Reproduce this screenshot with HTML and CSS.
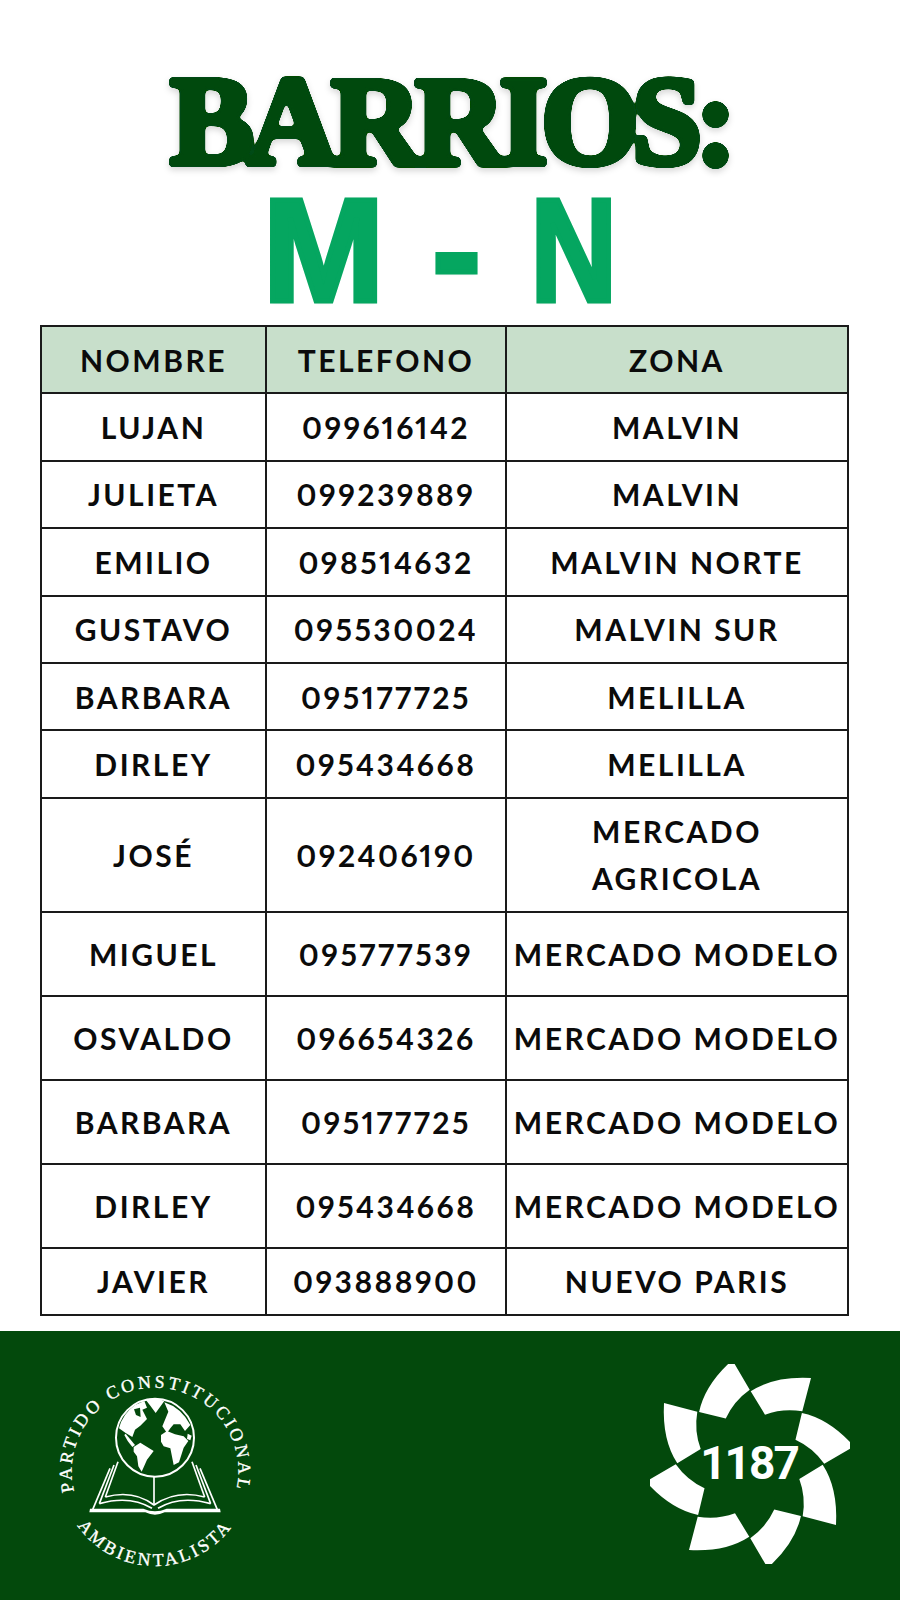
FILE: index.html
```html
<!DOCTYPE html>
<html lang="es">
<head>
  <meta charset="UTF-8" />
  <meta name="viewport" content="width=device-width, initial-scale=1.0"/>
  <title>Barrios M - N</title>
  <link rel="stylesheet" href="styles.css">
</head>
<body>
  <!-- rounds the serif corners of the title -->
  <svg class="defs" aria-hidden="true">
    <filter id="soften" x="-5%" y="-5%" width="110%" height="110%">
      <feGaussianBlur stdDeviation="2.2"/>
      <feComponentTransfer>
        <feFuncA type="linear" slope="12" intercept="-5"/>
      </feComponentTransfer>
    </filter>
  </svg>

  <header class="hero">
    <h1 class="title">BARRIOS:</h1>
    <div class="letters"><span>M</span><span>-</span><span class="letter-n">N</span></div>
  </header>

  <table class="contacts">
    <colgroup>
      <col class="col-name">
      <col class="col-phone">
      <col class="col-zone">
    </colgroup>
    <thead>
      <tr><th>NOMBRE</th><th>TELEFONO</th><th>ZONA</th></tr>
    </thead>
    <tbody>
      <tr><td>LUJAN</td><td>099616142</td><td>MALVIN</td></tr>
      <tr><td>JULIETA</td><td>099239889</td><td>MALVIN</td></tr>
      <tr><td>EMILIO</td><td>098514632</td><td>MALVIN NORTE</td></tr>
      <tr><td>GUSTAVO</td><td>095530024</td><td>MALVIN SUR</td></tr>
      <tr><td>BARBARA</td><td>095177725</td><td>MELILLA</td></tr>
      <tr><td>DIRLEY</td><td>095434668</td><td>MELILLA</td></tr>
      <tr class="tall"><td>JOSÉ</td><td>092406190</td><td>MERCADO<br>AGRICOLA</td></tr>
      <tr class="mid"><td>MIGUEL</td><td>095777539</td><td>MERCADO MODELO</td></tr>
      <tr class="mid"><td>OSVALDO</td><td>096654326</td><td>MERCADO MODELO</td></tr>
      <tr class="mid"><td>BARBARA</td><td>095177725</td><td>MERCADO MODELO</td></tr>
      <tr class="mid"><td>DIRLEY</td><td>095434668</td><td>MERCADO MODELO</td></tr>
      <tr><td>JAVIER</td><td>093888900</td><td>NUEVO PARIS</td></tr>
    </tbody>
  </table>

  <footer class="footer">
    <svg class="logo-party" viewBox="0 0 750 690" role="img" aria-label="Partido Constitucional Ambientalista">
      <defs>
        <path id="arc-top" d="M375 610 A250 250 0 1 1 375 110 A250 250 0 1 1 375 610"/>
        <path id="arc-bottom" d="M375 75 A285 285 0 1 0 375 645 A285 285 0 1 0 375 75"/>
      </defs>
      <text class="ring-text"><textPath href="#arc-top" startOffset="50%" text-anchor="middle">PARTIDO CONSTITUCIONAL</textPath></text>
      <text class="ring-text"><textPath href="#arc-bottom" startOffset="50%" text-anchor="middle">AMBIENTALISTA</textPath></text>
      <!-- book -->
      <path class="line" d="M240 352 L188 476"/>
      <path class="line" d="M252 342 L208 458"/>
      <path class="line" d="M264 332 L226 438"/>
      <path class="line" d="M510 352 L562 476"/>
      <path class="line" d="M498 342 L542 458"/>
      <path class="line" d="M486 332 L524 438"/>
      <path class="line" d="M226 438 Q310 415 372 462 Q440 415 524 438"/>
      <path class="line" d="M208 458 Q300 432 366 472 M384 472 Q450 432 542 458"/>
      <path class="line" d="M372 376 V462"/>
      <path class="land" d="M180 473 H340 Q375 488 410 473 H570 L572 484 H404 Q375 498 346 484 H178Z"/>
      <!-- globe -->
      <circle class="globe" cx="375" cy="260" r="117"/>
      <g class="land" transform="translate(165 120)">
        <path d="M102 112 Q112 70 150 42 L178 30 L186 50 L172 56 L186 84 L166 104 L150 116 L142 138 L122 126Z"/>
        <path d="M182 26 Q210 18 238 30 L212 66 L196 44Z"/>
        <path d="M122 128 L150 162 L142 168 Q126 150 118 132Z"/>
        <path d="M146 168 L166 155 L206 180 L186 206 L170 242 L160 226 L156 196 L146 182Z"/>
        <path d="M238 34 Q288 50 316 102 L300 120 L286 100 L266 100 L256 112 L246 126 L232 106 L250 62Z"/>
        <path d="M228 132 L246 120 L270 130 L296 136 L310 150 L296 170 L282 214 L266 222 L256 172 L236 166 L228 152Z"/>
        <path d="M308 128 L320 134 L316 148 L306 144Z"/>
      </g>
      <path class="hudson" d="M312 175 L330 170 L332 198 L318 192Z"/>
    </svg>

    <svg class="logo-star" viewBox="-100 -100 200 200" role="img" aria-label="1187">
      <defs>
        <path id="petal" d="M0.7 -72.7 Q24 -88 61 -86 L52.3 -52.7 Q33 -56 15 -49.3Z"/>
      </defs>
      <use href="#petal"/>
      <use href="#petal" transform="rotate(45)"/>
      <use href="#petal" transform="rotate(90)"/>
      <use href="#petal" transform="rotate(135)"/>
      <use href="#petal" transform="rotate(180)"/>
      <use href="#petal" transform="rotate(225)"/>
      <use href="#petal" transform="rotate(270)"/>
      <use href="#petal" transform="rotate(315)"/>
      <text class="star-num" x="-1" y="15" text-anchor="middle">1187</text>
    </svg>
  </footer>
</body>
</html>
```

FILE: styles.css
```css
* {
  box-sizing: border-box;
}
body {
  margin: 0;
  background: #fff;
  font-family: 'Lato', 'Liberation Sans', sans-serif;
  color: #0b0b0b;
}
.defs {
  display: block;
  width: 0;
  height: 0;
}
.hero {
  height: 325px;
  padding-top: 62px;
  text-align: center;
}
.title {
  margin: 0;
  height: 128px;
  font-family: 'Liberation Serif', serif;
  font-size: 126px;
  line-height: 120px;
  font-weight: 700;
  letter-spacing: -7px;
  color: #03490c;
  -webkit-text-stroke: 6px #03490c;
  filter: url(#soften) drop-shadow(0 3px 3px rgba(0,0,0,0.16));
}
.letters {
  display: flex;
  justify-content: center;
  gap: 48px;
  padding-right: 11px;
  font-family: 'Liberation Sans Narrow', 'Liberation Sans', sans-serif;
  font-size: 146px;
  line-height: 122px;
  font-weight: 700;
  color: #05a660;
  -webkit-text-stroke: 5px #05a660;
  text-shadow: 0 2px 3px rgba(0,0,0,0.12);
}
.letter-n {
  margin-left: -8px;
  transform: scaleX(0.82);
}
.contacts {
  width: 809px;
  margin-left: 40px;
  border-collapse: collapse;
  table-layout: fixed;
}
.col-name { width: 225px; }
.col-phone { width: 240px; }
.contacts th,
.contacts td {
  height: 67.4px;
  padding: 1px 0 0;
  border: 2px solid #1a1a1a;
  text-align: center;
  font-size: 30px;
  line-height: 47px;
  font-weight: 700;
  letter-spacing: 2.5px;
  font-variant-numeric: proportional-nums;
}
.contacts th {
  background: #c8dfcb;
}
.contacts .tall td { height: 114px; }
.contacts .mid td { height: 84px; }
.footer {
  margin-top: 15px;
  height: 270px;
  padding: 20px 50px 0 30px;
  background: #03490c;
  display: flex;
  justify-content: space-between;
  align-items: flex-start;
}
.logo-party {
  width: 250px;
  height: 230px;
}
.logo-star {
  width: 200px;
  height: 200px;
  margin-top: 13px;
  fill: #fff;
}
.ring-text {
  font-family: 'Liberation Serif', serif;
  font-size: 54px;
  letter-spacing: 9px;
  fill: #fff;
  stroke: #fff;
  stroke-width: 1;
}
.line {
  fill: none;
  stroke: #fff;
  stroke-width: 5;
  stroke-linejoin: round;
}
.globe {
  fill: #03490c;
  stroke: #fff;
  stroke-width: 6;
}
.land {
  fill: #fff;
}
.hudson {
  fill: #03490c;
}
.star-num {
  font-family: 'Roboto', sans-serif;
  font-size: 46px;
  font-weight: 700;
  letter-spacing: -2px;
  fill: #fff;
}
```
